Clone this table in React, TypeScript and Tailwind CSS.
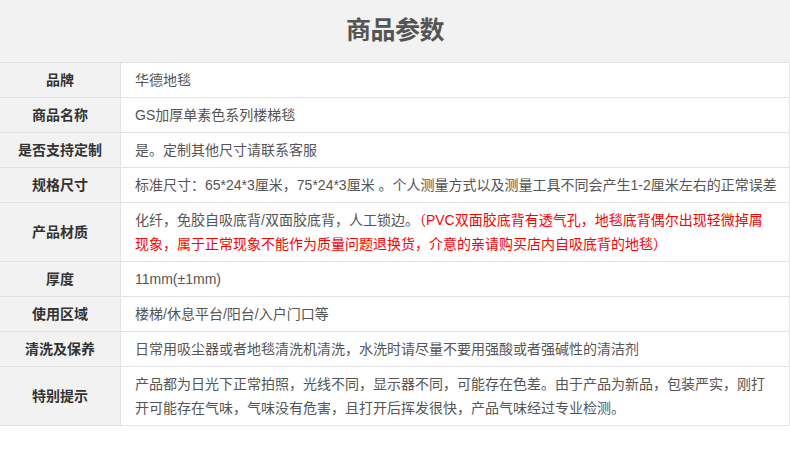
const FONT = '"Liberation Sans", "Noto Sans CJK SC", sans-serif';

type Row = { label: string; value: React.ReactNode };

const rows: Row[] = [
  { label: "品牌", value: "华德地毯" },
  { label: "商品名称", value: "GS加厚单素色系列楼梯毯" },
  { label: "是否支持定制", value: "是。定制其他尺寸请联系客服" },
  {
    label: "规格尺寸",
    value: "标准尺寸：65*24*3厘米，75*24*3厘米 。个人测量方式以及测量工具不同会产生1-2厘米左右的正常误差",
  },
  {
    label: "产品材质",
    value: (
      <>
        化纤，免胶自吸底背/双面胶底背，人工锁边。
        <span className="text-[#f00]">
          （PVC双面胶底背有透气孔，地毯底背偶尔出现轻微掉屑
          <br />
          现象，属于正常现象不能作为质量问题退换货，介意的亲请购买店内自吸底背的地毯）
        </span>
      </>
    ),
  },
  { label: "厚度", value: "11mm(±1mm)" },
  { label: "使用区域", value: "楼梯/休息平台/阳台/入户门口等" },
  {
    label: "清洗及保养",
    value: "日常用吸尘器或者地毯清洗机清洗，水洗时请尽量不要用强酸或者强碱性的清洁剂",
  },
  {
    label: "特别提示",
    value: (
      <>
        产品都为日光下正常拍照，光线不同，显示器不同，可能存在色差。由于产品为新品，包装严实，刚打
        <br />
        开可能存在气味，气味没有危害，且打开后挥发很快，产品气味经过专业检测。
      </>
    ),
  },
];

export default function App() {
  return (
    <div className="w-[790px] h-[462px] bg-white" style={{ fontFamily: FONT }}>
      {/* Title band */}
      <div className="h-[63px] bg-[#f2f2f2] border-b border-[#e3e3e3] flex items-center justify-center">
        <h2 className="text-[25px] font-bold text-[#555] tracking-[-0.5px]">商品参数</h2>
      </div>

      {/* Spec table */}
      <div className="border-r border-[#e3e3e3]">
        {rows.map(({ label, value }) => (
          <div key={label} className="grid grid-cols-[121px_1fr] border-b border-[#e3e3e3]">
            <div className="bg-[#f2f2f2] border-r border-[#e3e3e3] flex items-center justify-center text-[14px] font-bold text-[#333]">
              {label}
            </div>
            <div className="pl-[14px] py-[5px] text-[14px] leading-6 text-[#555] whitespace-nowrap">
              {value}
            </div>
          </div>
        ))}
      </div>
    </div>
  );
}
